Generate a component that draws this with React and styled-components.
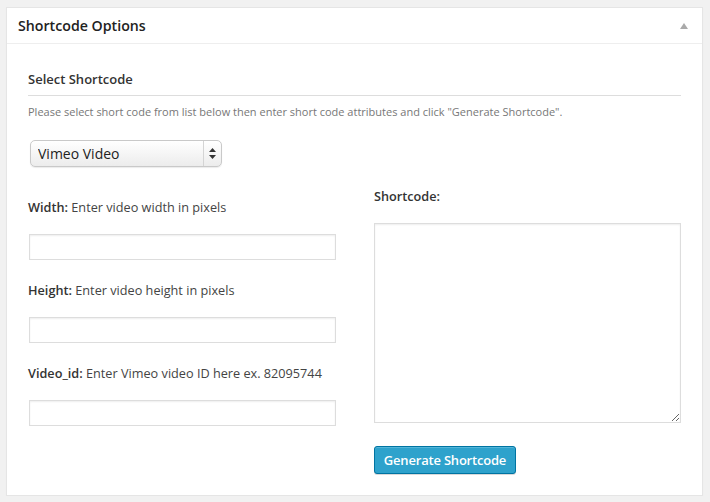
import React from 'react';
import styled, { createGlobalStyle } from 'styled-components';

const GlobalStyle = createGlobalStyle`
  body {
    margin: 0;
    background: #f1f1f1;
    font-family: 'Open Sans', 'Liberation Sans', sans-serif;
    color: #444;
  }
`;

const Panel = styled.div`
  margin: 7px 0 0 6px;
  width: 697px;
  height: 489px;
  box-sizing: border-box;
  background: #fff;
  border: 1px solid #e5e5e5;
  box-shadow: 0 1px 1px rgba(0, 0, 0, 0.04);
`;

const Header = styled.div`
  display: flex;
  align-items: center;
  justify-content: space-between;
  height: 35px;
  padding: 0 14px 0 11px;
  border-bottom: 1px solid #eee;
`;

const Title = styled.h2`
  margin: 0;
  font-size: 14.2px;
  font-weight: 600;
  color: #222;
  line-height: 18px;
`;

const Toggle = styled.span`
  width: 0;
  height: 0;
  border-left: 4px solid transparent;
  border-right: 4px solid transparent;
  border-bottom: 6px solid #aaa;
`;

const Body = styled.div`
  padding: 26px 21px 0 21px;
`;

const Heading = styled.h3`
  margin: 0;
  padding-bottom: 7px;
  border-bottom: 1px solid #ddd;
  font-size: 13px;
  font-weight: 600;
  line-height: 18px;
  color: #333;
`;

const Hint = styled.p`
  margin: 8px 0 0;
  font-size: 11px;
  line-height: 16px;
  color: #777;
`;

const SelectBox = styled.div`
  display: flex;
  align-items: stretch;
  width: 192px;
  height: 27px;
  margin: 20px 0 0 2px;
  box-sizing: border-box;
  border: 1px solid #c9c9c9;
  border-radius: 5px;
  background: linear-gradient(#ffffff, #ececec);
  box-shadow: 0 1px 1px rgba(0, 0, 0, 0.08);
`;

const NativeSelect = styled.select`
  flex: 1;
  appearance: none;
  border: none;
  background: transparent;
  padding: 0 0 0 7px;
  font-family: 'Open Sans', 'Liberation Sans', sans-serif;
  font-size: 14px;
  color: #222;
  outline: none;
`;

const ArrowCell = styled.span`
  display: flex;
  align-items: center;
  justify-content: center;
  width: 17px;
  border-left: 1px solid #d4d4d4;
`;

const Columns = styled.div`
  display: grid;
  grid-template-columns: 307px 307px;
  column-gap: 39px;
  align-items: start;
  margin-top: 20px;
`;

const Column = styled.div`
  display: flex;
  flex-direction: column;
  padding-top: ${p => p.$offset || 0}px;
`;

const Field = styled.div`
  display: flex;
  flex-direction: column;
  margin-bottom: 21px;
`;

const Label = styled.label`
  font-size: 12.7px;
  line-height: 18px;
  margin-bottom: 18px;
  color: #444;
  b {
    font-weight: 600;
    color: #333;
  }
`;

const TextInput = styled.input`
  width: 307px;
  height: 26px;
  margin-left: 1px;
  box-sizing: border-box;
  border: 1px solid #ddd;
  box-shadow: inset 0 1px 2px rgba(0, 0, 0, 0.07);
  background: #fff;
  outline: none;
`;

const TextArea = styled.textarea`
  width: 307px;
  height: 200px;
  box-sizing: border-box;
  border: 1px solid #ddd;
  box-shadow: inset 0 1px 2px rgba(0, 0, 0, 0.07);
  outline: none;
`;

const Button = styled.button`
  align-self: flex-start;
  width: 142px;
  height: 28px;
  margin-top: 23px;
  padding: 0;
  box-sizing: border-box;
  border: 1px solid #0074a2;
  border-radius: 3px;
  background: #2ea2cc;
  box-shadow: inset 0 1px 0 rgba(120, 200, 230, 0.5), 0 1px 0 rgba(0, 0, 0, 0.15);
  color: #fff;
  font-family: 'Open Sans', 'Liberation Sans', sans-serif;
  font-size: 13px;
  font-weight: 600;
  letter-spacing: -0.2px;
  cursor: pointer;
`;

const fields = [
  { name: 'Width', hint: 'Enter video width in pixels' },
  { name: 'Height', hint: 'Enter video height in pixels' },
  { name: 'Video_id', hint: 'Enter Vimeo video ID here ex. 82095744' },
];

export default function App() {
  return (
    <>
      <GlobalStyle />
      <Panel>
        <Header>
          <Title>Shortcode Options</Title>
          <Toggle />
        </Header>
        <Body>
          <Heading>Select Shortcode</Heading>
          <Hint>
            Please select short code from list below then enter short code attributes and click "Generate Shortcode".
          </Hint>
          <SelectBox>
            <NativeSelect defaultValue="vimeo">
              <option value="youtube">YouTube Video</option>
              <option value="vimeo">Vimeo Video</option>
            </NativeSelect>
            <ArrowCell>
              <svg width="7" height="11" viewBox="0 0 7 11">
                <path d="M3.5 0 L7 4 L0 4 Z M3.5 11 L7 7 L0 7 Z" fill="#333" />
              </svg>
            </ArrowCell>
          </SelectBox>
          <Columns>
            <Column $offset={11}>
              {fields.map(f => (
                <Field key={f.name}>
                  <Label>
                    <b>{f.name}:</b> {f.hint}
                  </Label>
                  <TextInput type="text" />
                </Field>
              ))}
            </Column>
            <Column>
              <Label>
                <b>Shortcode:</b>
              </Label>
              <TextArea />
              <Button>Generate Shortcode</Button>
            </Column>
          </Columns>
        </Body>
      </Panel>
    </>
  );
}
